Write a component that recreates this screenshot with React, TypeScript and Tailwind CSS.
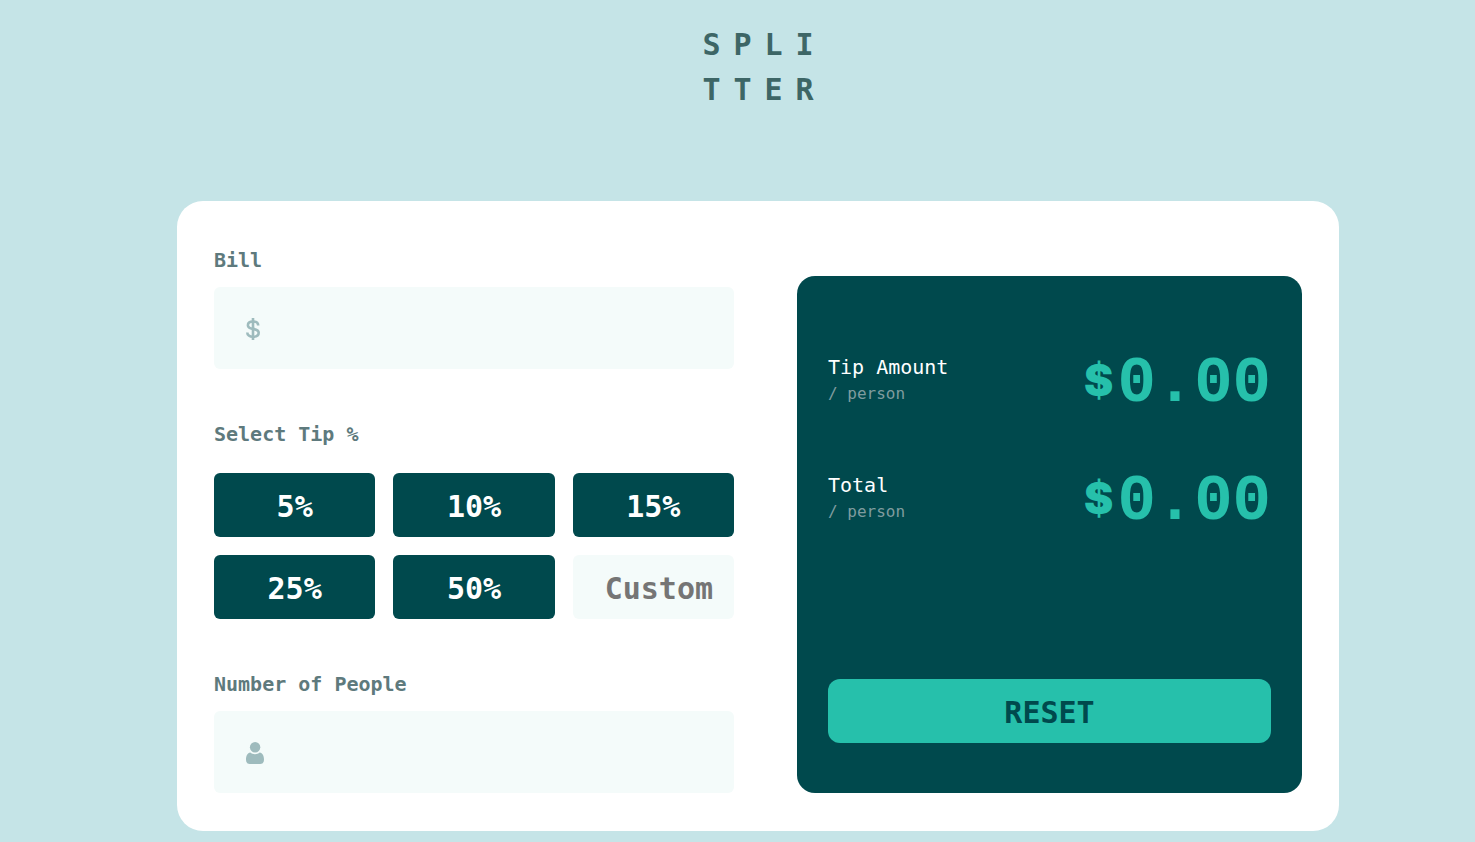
import { useState } from "react";

const TIPS = [5, 10, 15, 25, 50];

function DollarIcon() {
  return (
    <svg viewBox="0 0 14 22" className="h-[22px] w-[14px]" aria-hidden="true" fill="none" stroke="#9ebbbd" strokeWidth="2.6">
      <path d="M7 0v22" />
      <path d="M12.2 7.6C12.2 5.2 10.3 3.500 7 3.500S1.900 5 1.900 7.200c0 2.500 2.100 3.200 5.100 3.700s5.700 1.200 5.700 3.900c0 2.500-2.100 4-5.700 4s-5.700-1.800-5.700-4.400" />
    </svg>
  );
}

function PersonIcon() {
  return (
    <svg viewBox="0 0 18 22" className="h-[22px] w-[18px]" aria-hidden="true" fill="#9ebbbd">
      <ellipse cx="9.1" cy="5.2" rx="5.2" ry="5.2" />
      <path d="M4.3 10.6c1.3 1.1 2.900 1.700 4.700 1.700s3.400-.6 4.700-1.700c2.800.5 4.300 3.300 4.300 7.200 0 2.700-1.300 4.200-3.700 4.200H3.700C1.300 22 0 20.500 0 17.800c0-3.900 1.500-6.700 4.300-7.200Z" />
    </svg>
  );
}

type FieldProps = {
  id: string;
  label: string;
  icon: React.ReactNode;
  value: string;
  onChange: (value: string) => void;
};

function Field({ id, label, icon, value, onChange }: FieldProps) {
  return (
    <div className="flex flex-col gap-3">
      <label htmlFor={id} className="text-xl/[30px] font-bold text-[#5e7a7d]">
        {label}
      </label>
      <div className="flex h-[82px] items-center gap-4 rounded-md bg-[#f4fbfa] px-8 pt-[2px] focus-within:ring-2 focus-within:ring-[#26c0ab]">
        {icon}
        <input
          id={id}
          type="text"
          inputMode="decimal"
          value={value}
          onChange={(e) => onChange(e.target.value)}
          className="h-full min-w-0 flex-1 bg-transparent text-right text-3xl font-bold text-[#00494d] outline-none"
        />
      </div>
    </div>
  );
}

function Amount({ label, value }: { label: string; value: number }) {
  return (
    <div className="flex items-center justify-between">
      <div className="pb-[2px]">
        <p className="text-xl/[30px] text-white">{label}</p>
        <p className="text-base/6 text-[#7f9c9f]">/ person</p>
      </div>
      <p className="flex items-center gap-1 pt-2 font-['Liberation_Mono',monospace] text-[64px]/[86px] font-bold text-[#26c0ab]">
        <span className="pb-2 font-['Inter',sans-serif] text-[44px]/[78px] font-black">$</span>
        <span>{value.toFixed(2)}</span>
      </p>
    </div>
  );
}

export default function App() {
  const [bill, setBill] = useState("");
  const [people, setPeople] = useState("");
  const [custom, setCustom] = useState("");
  const [tip, setTip] = useState(0);

  const count = Number(people) || 0;
  const total = Number(bill) || 0;
  const rate = (Number(custom) || tip) / 100;
  const tipEach = count > 0 ? (total * rate) / count : 0;
  const totalEach = count > 0 ? (total * (1 + rate)) / count : 0;

  const reset = () => {
    setBill("");
    setPeople("");
    setCustom("");
    setTip(0);
  };

  return (
    <div className="flex min-h-screen flex-col items-center bg-[#c5e4e7] pt-[22px] pb-[11px] pl-[41px] font-['DejaVu_Sans_Mono',monospace]">
      <h1 className="pl-[13px] text-3xl/[45px] font-bold tracking-[13px] text-[#3d6666]">
        SPLI
        <br />
        TTER
      </h1>

      <main className="mt-[89px] grid w-full max-w-[1162px] grid-cols-[520fr_505fr] gap-[63px] rounded-[26px] bg-white px-[37px] pt-11 pb-[38px]">
        <form className="flex flex-col gap-[50px]" onSubmit={(e) => e.preventDefault()}>
          <Field id="bill" label="Bill" icon={<DollarIcon />} value={bill} onChange={setBill} />

          <fieldset>
            <legend className="mb-6 text-xl/[30px] font-bold text-[#5e7a7d]">Select Tip %</legend>
            <div className="grid grid-cols-3 gap-[18px]">
              {TIPS.map((t) => (
                <button
                  key={t}
                  type="button"
                  aria-pressed={tip === t}
                  onClick={() => setTip(t)}
                  className="h-16 rounded-md bg-[#00494d] pt-1 text-3xl font-bold text-white hover:bg-[#26c0ab] aria-pressed:bg-[#26c0ab]"
                >
                  {t}%
                </button>
              ))}
              <input
                type="text"
                inputMode="decimal"
                aria-label="Custom tip"
                placeholder="Custom"
                value={custom}
                onChange={(e) => setCustom(e.target.value)}
                className="h-16 w-full min-w-0 rounded-md bg-[#f4fbfa] pt-[2px] pl-8 text-3xl font-bold text-[#00494d] placeholder-[#757575] outline-none focus:ring-2 focus:ring-[#26c0ab]"
              />
            </div>
          </fieldset>

          <Field id="people" label="Number of People" icon={<PersonIcon />} value={people} onChange={setPeople} />
        </form>

        <section className="mt-[31px] flex flex-col gap-6 rounded-[18px] bg-[#00494d] px-[31px] pt-[57px] pb-[50px]">
          <Amount label="Tip Amount" value={tipEach} />
          <Amount label="Total" value={totalEach} />
          <button
            type="button"
            onClick={reset}
            className="mt-auto h-16 rounded-xl bg-[#26c0ab] pt-1 text-3xl font-bold text-[#00494d] hover:bg-[#9fe8df]"
          >
            RESET
          </button>
        </section>
      </main>
    </div>
  );
}
